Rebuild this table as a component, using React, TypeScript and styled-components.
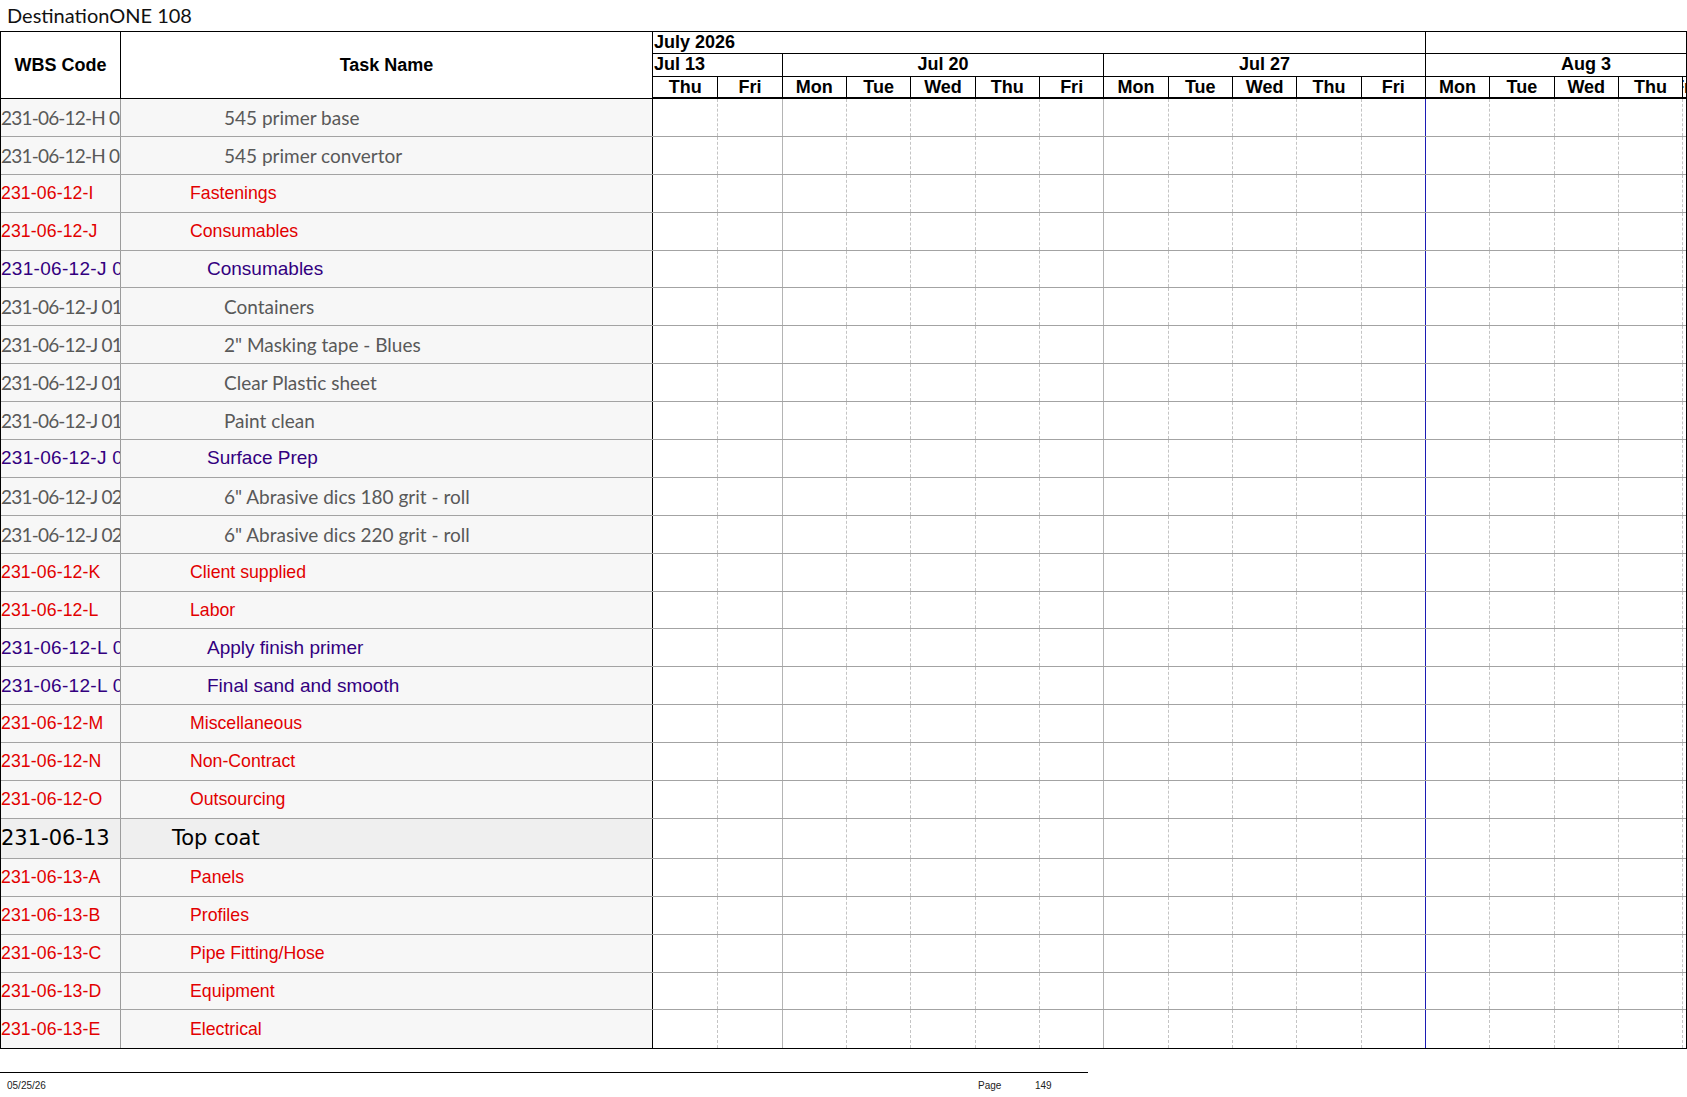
import React from "react";
import styled, { createGlobalStyle, css } from "styled-components";

const GlobalStyle = createGlobalStyle`
  html, body { margin: 0; padding: 0; background: #ffffff; }
  body { font-family: "Liberation Sans", Arial, sans-serif; color: #000; }
  * { box-sizing: border-box; }
`;

const COLS = "120px 532px repeat(16, 64.33px) 1fr";

type Kind = "item" | "red" | "purple" | "top";
type DayKind = "first" | "dash" | "week" | "today";

const Page = styled.div`
  width: 1687px;
`;

const Title = styled.div`
  height: 31px;
  padding-left: 7px;
  font-family: Lato, "Noto Sans", sans-serif;
  font-weight: 400;
  font-size: 20px;
  line-height: 30px;
  color: #111;
  white-space: nowrap;
`;

const Table = styled.div`
  width: 1687px;
  border: 1px solid #000;
`;

const Header = styled.div`
  display: grid;
  grid-template-columns: ${COLS};
  grid-template-rows: 22px 23px 22px;
  background: #fff;
`;

const HeadLabel = styled.div<{ $col: number }>`
  grid-row: 1 / 4;
  grid-column: ${(p) => p.$col};
  border-right: 1px solid #000;
  border-bottom: 1px solid #000;
  display: flex;
  align-items: center;
  justify-content: center;
  font-weight: bold;
  font-size: 18px;
`;

const HeadCell = styled.div<{ $row: number; $col: number; $span: number; $divider?: boolean; $thick?: boolean; $center?: boolean }>`
  grid-row: ${(p) => p.$row};
  grid-column: ${(p) => p.$col} / span ${(p) => p.$span};
  border-bottom: ${(p) => (p.$thick ? "2px" : "1px")} solid #000;
  border-left: ${(p) => (p.$divider ? "1px solid #000" : "none")};
  font-weight: bold;
  font-size: 18px;
  line-height: 21px;
  white-space: nowrap;
  overflow: hidden;
  display: flex;
  justify-content: ${(p) => (p.$center ? "center" : "flex-start")};
  padding-left: ${(p) => (p.$center ? "0" : "1px")};
`;

const WeekText = styled.span<{ $width?: string }>`
  display: block;
  flex: none;
  text-align: center;
  width: ${(p) => p.$width ?? "auto"};
`;

const Row = styled.div<{ $h: number; $last?: boolean }>`
  display: grid;
  grid-template-columns: ${COLS};
  height: ${(p) => p.$h}px;
  border-bottom: ${(p) => (p.$last ? "none" : "1px solid #a3a3a3")};
`;

const kindText: Record<Kind, ReturnType<typeof css>> = {
  item: css`
    font-family: Lato, "Noto Sans", sans-serif;
    font-size: 19px;
    color: #595959;
  `,
  red: css`
    font-family: "Liberation Sans", Arial, sans-serif;
    font-size: 17.7px;
    color: #e20000;
  `,
  purple: css`
    font-family: "Liberation Sans", Arial, sans-serif;
    font-size: 19px;
    color: #33007f;
  `,
  top: css`
    font-family: "DejaVu Sans", Tahoma, sans-serif;
    font-size: 21px;
    color: #000;
  `,
};

const codeSpacing: Record<Kind, string> = {
  item: "-0.8px",
  red: "0.1px",
  purple: "0.3px",
  top: "0px",
};

const namePad: Record<Kind, number> = {
  item: 103,
  red: 69,
  purple: 86,
  top: 51,
};

const CodeCell = styled.div<{ $kind: Kind }>`
  background: ${(p) => (p.$kind === "top" ? "#efefef" : "#f7f7f7")};
  border-right: 1px solid #9c9c9c;
  overflow: hidden;
  white-space: nowrap;
  display: flex;
  align-items: center;
  ${(p) => kindText[p.$kind]};
  letter-spacing: ${(p) => codeSpacing[p.$kind]};
`;

const NameCell = styled.div<{ $kind: Kind }>`
  background: ${(p) => (p.$kind === "top" ? "#efefef" : "#f7f7f7")};
  border-right: 1px solid #000;
  overflow: hidden;
  white-space: nowrap;
  display: flex;
  align-items: center;
  padding-left: ${(p) => namePad[p.$kind]}px;
  ${(p) => kindText[p.$kind]};
`;

const dayBorder: Record<DayKind, string> = {
  first: "none",
  dash: "1px dashed #c4c4c4",
  week: "1px solid #b4b4b4",
  today: "1px solid #1c1cb4",
};

const DayCell = styled.div<{ $kind: DayKind }>`
  background: #fff;
  border-left: ${(p) => dayBorder[p.$kind]};
`;

const Footer = styled.div`
  width: 1088px;
  margin-top: 23px;
  border-top: 1px solid #000;
  display: grid;
  grid-template-columns: 978px 57px 1fr;
  padding-top: 7px;
  font-family: "Liberation Sans", Arial, sans-serif;
  font-size: 10px;
  line-height: 12px;
  color: #222;
`;

const FootDate = styled.span`
  padding-left: 7px;
`;

const FootText = styled.span``;

const days = ["Thu", "Fri", "Mon", "Tue", "Wed", "Thu", "Fri", "Mon", "Tue", "Wed", "Thu", "Fri", "Mon", "Tue", "Wed", "Thu", "Fri"];
const dayKinds: DayKind[] = days.map((d, i) =>
  i === 0 ? "first" : i === 12 ? "today" : d === "Mon" ? "week" : "dash"
);

type Task = { code: string; name: string; kind: Kind };

const tasks: Task[] = [
  { code: "231-06-12-H 01 01", name: "545 primer base", kind: "item" },
  { code: "231-06-12-H 01 02", name: "545 primer convertor", kind: "item" },
  { code: "231-06-12-I", name: "Fastenings", kind: "red" },
  { code: "231-06-12-J", name: "Consumables", kind: "red" },
  { code: "231-06-12-J 01", name: "Consumables", kind: "purple" },
  { code: "231-06-12-J 01 01", name: "Containers", kind: "item" },
  { code: "231-06-12-J 01 02", name: "2\" Masking tape - Blues", kind: "item" },
  { code: "231-06-12-J 01 03", name: "Clear Plastic sheet", kind: "item" },
  { code: "231-06-12-J 01 04", name: "Paint clean", kind: "item" },
  { code: "231-06-12-J 02", name: "Surface Prep", kind: "purple" },
  { code: "231-06-12-J 02 01", name: "6\" Abrasive dics 180 grit - roll", kind: "item" },
  { code: "231-06-12-J 02 02", name: "6\" Abrasive dics 220 grit - roll", kind: "item" },
  { code: "231-06-12-K", name: "Client supplied", kind: "red" },
  { code: "231-06-12-L", name: "Labor", kind: "red" },
  { code: "231-06-12-L 01", name: "Apply finish primer", kind: "purple" },
  { code: "231-06-12-L 02", name: "Final sand and smooth", kind: "purple" },
  { code: "231-06-12-M", name: "Miscellaneous", kind: "red" },
  { code: "231-06-12-N", name: "Non-Contract", kind: "red" },
  { code: "231-06-12-O", name: "Outsourcing", kind: "red" },
  { code: "231-06-13", name: "Top coat", kind: "top" },
  { code: "231-06-13-A", name: "Panels", kind: "red" },
  { code: "231-06-13-B", name: "Profiles", kind: "red" },
  { code: "231-06-13-C", name: "Pipe Fitting/Hose", kind: "red" },
  { code: "231-06-13-D", name: "Equipment", kind: "red" },
  { code: "231-06-13-E", name: "Electrical", kind: "red" },
];

const weeks = [
  { label: "Jul 13", col: 3, span: 2, center: false },
  { label: "Jul 20", col: 5, span: 5, center: true },
  { label: "Jul 27", col: 10, span: 5, center: true },
  { label: "Aug 3", col: 15, span: 5, center: false, width: "318px" },
];

export default function App() {
  return (
    <Page>
      <GlobalStyle />
      <Title>DestinationONE 108</Title>
      <Table>
        <Header>
          <HeadLabel $col={1}>WBS Code</HeadLabel>
          <HeadLabel $col={2}>Task Name</HeadLabel>
          <HeadCell $row={1} $col={3} $span={12}>July 2026</HeadCell>
          <HeadCell $row={1} $col={15} $span={5} $divider />
          {weeks.map((w, i) => (
            <HeadCell key={w.label} $row={2} $col={w.col} $span={w.span} $divider={i > 0} $center={w.center}>
              <WeekText $width={w.width}>{w.label}</WeekText>
            </HeadCell>
          ))}
          {days.map((d, i) => (
            <HeadCell key={i} $row={3} $col={3 + i} $span={1} $divider={i > 0} $thick $center>
              {d}
            </HeadCell>
          ))}
        </Header>
        {tasks.map((t, r) => (
          <Row key={r} $h={t.kind === "top" ? 40 : 37.9} $last={r === tasks.length - 1}>
            <CodeCell $kind={t.kind}>{t.code}</CodeCell>
            <NameCell $kind={t.kind}>{t.name}</NameCell>
            {dayKinds.map((k, i) => (
              <DayCell key={i} $kind={k} />
            ))}
          </Row>
        ))}
      </Table>
      <Footer>
        <FootDate>05/25/26</FootDate>
        <FootText>Page</FootText>
        <FootText>149</FootText>
      </Footer>
    </Page>
  );
}
